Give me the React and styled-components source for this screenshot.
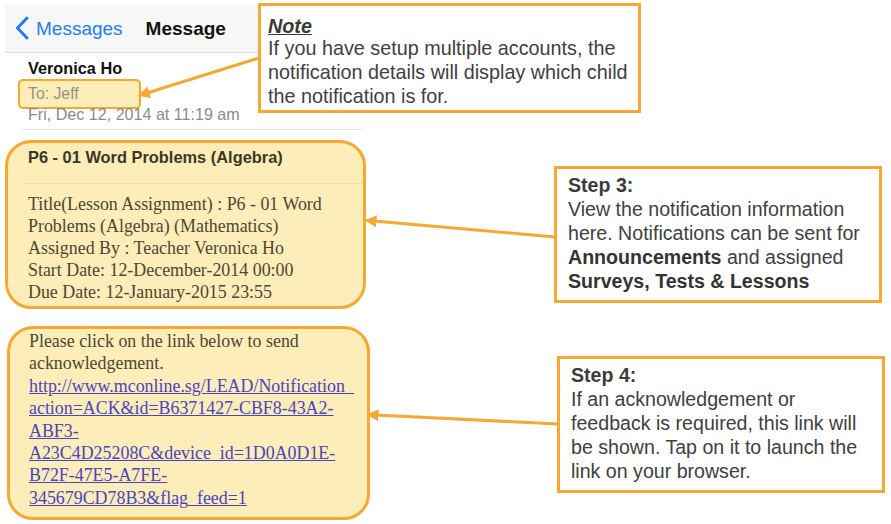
import React from "react";
import styled, { createGlobalStyle } from "styled-components";

const ORANGE = "#f5a833";
const CREAM = "#fdedb9";

const GlobalStyle = createGlobalStyle`
  html, body {
    margin: 0;
    padding: 0;
    background: #ffffff;
  }
  body {
    font-family: "Liberation Sans", Arial, sans-serif;
  }
`;

function App() {
  return (
    <>
      <GlobalStyle />
      <Page>
        <Phone>
          <NavBar>
            <BackLink>
              <svg width="14" height="24" viewBox="0 0 14 24">
                <polyline
                  points="12,2 2.5,12 12,22"
                  fill="none"
                  stroke="#1d7ef5"
                  strokeWidth="3"
                  strokeLinecap="round"
                  strokeLinejoin="round"
                />
              </svg>
              <span>Messages</span>
            </BackLink>
            <NavTitle>Message</NavTitle>
          </NavBar>

          <Meta>
            <Sender>Veronica Ho</Sender>
            <ToTag>To: Jeff</ToTag>
            <DateLine>Fri, Dec 12, 2014 at 11:19 am</DateLine>
          </Meta>
          <Separator />

          <Bubble>
            <BubbleTitle>P6 - 01 Word Problems (Algebra)</BubbleTitle>
            <BubbleDivider />
            <SerifText>
              Title(Lesson Assignment) : P6 - 01 Word
              <br />
              Problems (Algebra) (Mathematics)
              <br />
              Assigned By : Teacher Veronica Ho
              <br />
              Start Date: 12-December-2014 00:00
              <br />
              Due Date: 12-January-2015 23:55
            </SerifText>
          </Bubble>

          <Bubble $second>
            <SerifText $link>
              Please click on the link below to send
              <br />
              acknowledgement.
              <br />
              <a href="#ack">
                http://www.mconline.sg/LEAD/Notification_
                <br />
                action=ACK&amp;id=B6371427-CBF8-43A2-
                <br />
                ABF3-
                <br />
                A23C4D25208C&amp;device_id=1D0A0D1E-
                <br />
                B72F-47E5-A7FE-
                <br />
                345679CD78B3&amp;flag_feed=1
              </a>
            </SerifText>
          </Bubble>
        </Phone>

        <Callouts>
          <StepBox>
            <StepTitle>Step 3:</StepTitle>
            <StepText>
              View the notification information
              <br />
              here. Notifications can be sent for
              <br />
              <b>Announcements</b> and assigned
              <br />
              <b>Surveys, Tests &amp; Lessons</b>
            </StepText>
          </StepBox>
          <StepBox $shift={3} $gap={53}>
            <StepTitle>Step 4:</StepTitle>
            <StepText>
              If an acknowledgement or
              <br />
              feedback is required, this link will
              <br />
              be shown. Tap on it to launch the
              <br />
              link on your browser.
            </StepText>
          </StepBox>
        </Callouts>

        <NoteBox>
          <NoteTitle>Note</NoteTitle>
          <StepText $size={19.8}>
            If you have setup multiple accounts, the
            <br />
            notification details will display which child
            <br />
            the notification is for.
          </StepText>
        </NoteBox>

        <Arrows width="891" height="524" viewBox="0 0 891 524">
          <defs>
            <marker
              id="head"
              viewBox="0 0 10 10"
              refX="2"
              refY="5"
              markerWidth="4"
              markerHeight="4"
              orient="auto-start-reverse"
            >
              <path d="M0,0 L10,5 L0,10 z" fill={ORANGE} />
            </marker>
          </defs>
          <line x1="259" y1="58" x2="147" y2="93" markerEnd="url(#head)" />
          <line x1="555" y1="237" x2="374" y2="221" markerEnd="url(#head)" />
          <line x1="558" y1="424" x2="376" y2="415" markerEnd="url(#head)" />
        </Arrows>
      </Page>
    </>
  );
}

export default App;

const Page = styled.div`
  position: relative;
  display: flex;
  width: 891px;
  height: 524px;
  padding-left: 5px;
  box-sizing: border-box;
  overflow: hidden;
`;

const Phone = styled.div`
  width: 365px;
  flex-shrink: 0;
  display: flex;
  flex-direction: column;
`;

const NavBar = styled.div`
  margin-top: 5px;
  width: 357px;
  height: 47px;
  background: #f7f7f7;
  border-bottom: 1px solid #dadada;
  display: flex;
  align-items: center;
  gap: 23px;
  padding-left: 10px;
  box-sizing: content-box;
`;

const BackLink = styled.div`
  display: flex;
  align-items: center;
  gap: 7px;
  color: #1d7ef5;
  font-size: 19px;

  svg {
    display: block;
    margin-top: -1px;
  }
`;

const NavTitle = styled.div`
  font-size: 19px;
  font-weight: 700;
  color: #111111;
`;

const Meta = styled.div`
  display: flex;
  flex-direction: column;
  align-items: flex-start;
  padding: 5px 0 0 23px;
`;

const Sender = styled.div`
  font-size: 16.3px;
  line-height: 20px;
  font-weight: 700;
  color: #111111;
`;

const ToTag = styled.div`
  width: 123px;
  height: 30px;
  box-sizing: border-box;
  margin: 1px 0 -5px -10px;
  padding: 0 8px;
  border: 2px solid ${ORANGE};
  border-radius: 5px;
  background: ${CREAM};
  color: #97917b;
  font-size: 15.8px;
  line-height: 26px;
`;

const DateLine = styled.div`
  font-size: 16.1px;
  line-height: 20px;
  color: #8a8a8a;
`;

const Separator = styled.div`
  margin: 5px 0 10px 17px;
  width: 341px;
  height: 1px;
  background: #e6e6e6;
`;

const Bubble = styled.div`
  width: ${({ $second }) => ($second ? "363px" : "361px")};
  margin-left: ${({ $second }) => ($second ? "2px" : "0")};
  margin-top: ${({ $second }) => ($second ? "17px" : "0")};
  box-sizing: border-box;
  border: 3px solid ${ORANGE};
  border-radius: 26px;
  background: ${CREAM};
  padding: ${({ $second }) => ($second ? "1px 0 8px 19px" : "4px 0 3px 20px")};
`;

const BubbleTitle = styled.div`
  font-size: 16.4px;
  line-height: 20px;
  font-weight: 700;
  color: #3b3826;
`;

const BubbleDivider = styled.div`
  margin: 16px 0 9px -6px;
  height: 1px;
  background: #efdca6;
`;

const SerifText = styled.div`
  font-family: "Liberation Serif", "Times New Roman", serif;
  font-size: 17.9px;
  line-height: ${({ $link }) => ($link ? "22.4px" : "22px")};
  color: #4d4731;
  white-space: nowrap;

  a {
    color: #4b44bf;
    text-decoration: underline;
  }
`;

const Callouts = styled.div`
  margin-left: 184px;
  padding-top: 166px;
  display: flex;
  flex-direction: column;
`;

const StepBox = styled.div`
  width: 328px;
  height: 137px;
  box-sizing: border-box;
  margin-left: ${({ $shift }) => $shift || 0}px;
  margin-top: ${({ $gap }) => $gap || 0}px;
  border: 3px solid ${ORANGE};
  background: #ffffff;
  padding: 4px 0 0 11px;
`;

const StepTitle = styled.div`
  font-size: 19.6px;
  line-height: 24px;
  font-weight: 700;
  color: #3c3c3c;
`;

const StepText = styled.div`
  font-size: ${({ $size }) => $size || 19.6}px;
  line-height: 24px;
  color: #404040;
  white-space: nowrap;

  b {
    color: #333333;
  }
`;

const NoteBox = styled.div`
  position: absolute;
  left: 258px;
  top: 3px;
  width: 383px;
  height: 110px;
  box-sizing: border-box;
  border: 3px solid ${ORANGE};
  background: #ffffff;
  padding: 11px 0 0 7px;
`;

const NoteTitle = styled.div`
  font-size: 19.8px;
  line-height: 19px;
  font-weight: 700;
  font-style: italic;
  text-decoration: underline;
  color: #3a3a3a;
`;

const Arrows = styled.svg`
  position: absolute;
  left: 0;
  top: 0;
  pointer-events: none;

  line {
    stroke: ${ORANGE};
    stroke-width: 3;
  }
`;
